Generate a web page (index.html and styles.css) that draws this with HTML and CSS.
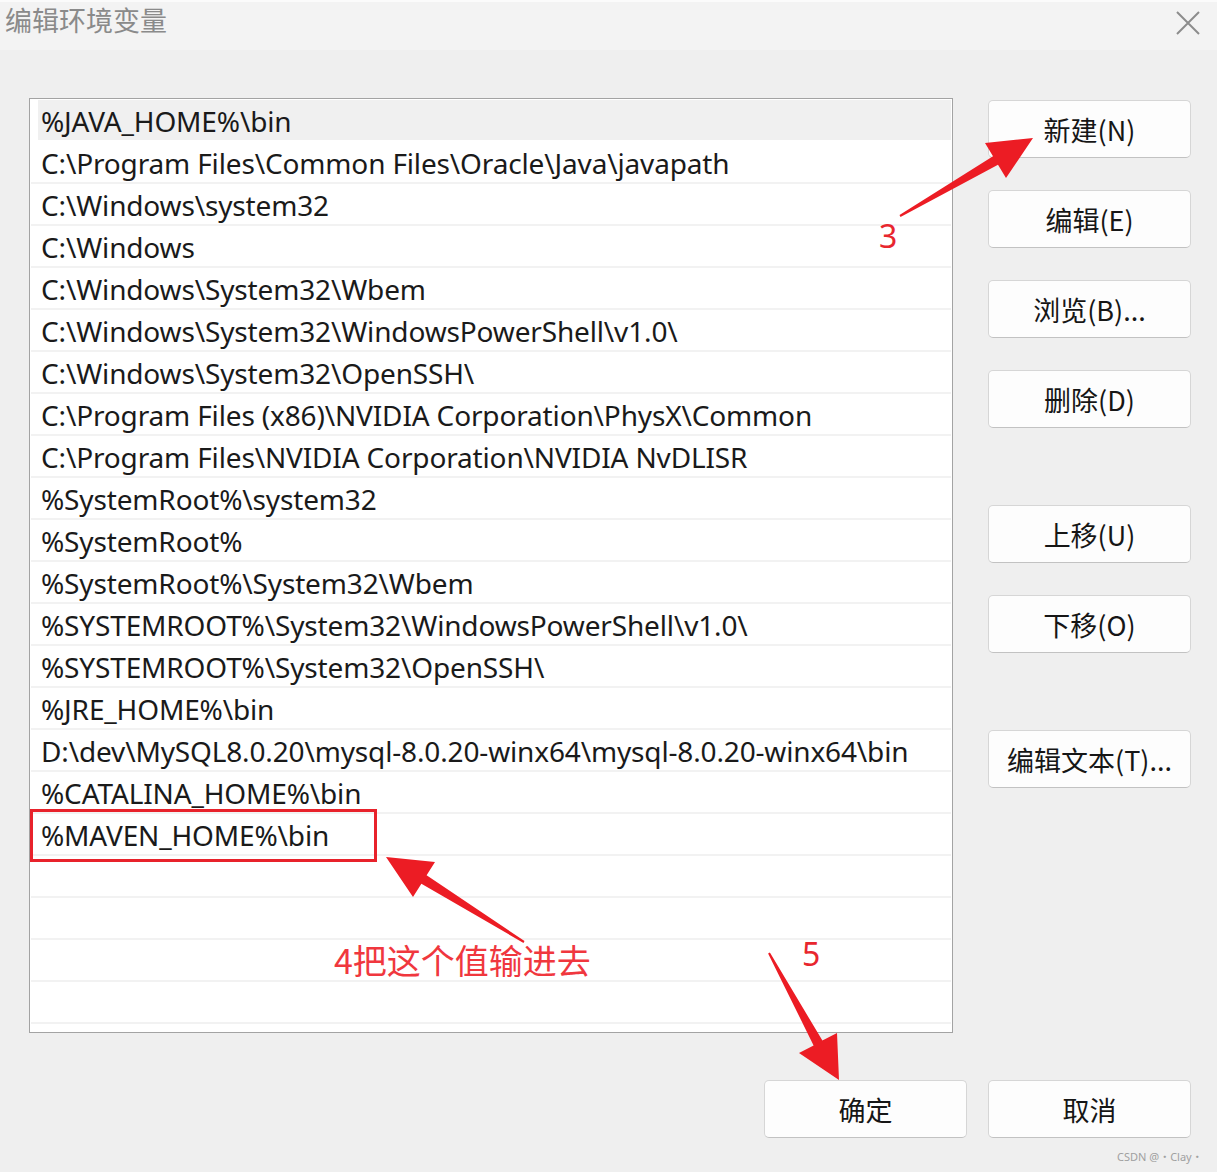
FILE: index.html
```html
<!DOCTYPE html>
<html lang="zh-CN">
<head>
    <meta charset="UTF-8">
    <title>编辑环境变量</title>
    <link rel="stylesheet" href="styles.css">
</head>
<body>
    <div class="dialog">
        <div class="titlebar">
            <span class="title">编辑环境变量</span>
            <svg class="close" width="26" height="26" viewBox="0 0 26 26">
                <path d="M2 2 L24 24 M24 2 L2 24" stroke="#8c8c8c" stroke-width="2" fill="none"/>
            </svg>
        </div>

        <div class="main">
            <div class="list">
                <div class="row selected">%JAVA_HOME%\bin</div>
                <div class="row">C:\Program Files\Common Files\Oracle\Java\javapath</div>
                <div class="row">C:\Windows\system32</div>
                <div class="row">C:\Windows</div>
                <div class="row">C:\Windows\System32\Wbem</div>
                <div class="row">C:\Windows\System32\WindowsPowerShell\v1.0\</div>
                <div class="row">C:\Windows\System32\OpenSSH\</div>
                <div class="row">C:\Program Files (x86)\NVIDIA Corporation\PhysX\Common</div>
                <div class="row">C:\Program Files\NVIDIA Corporation\NVIDIA NvDLISR</div>
                <div class="row">%SystemRoot%\system32</div>
                <div class="row">%SystemRoot%</div>
                <div class="row">%SystemRoot%\System32\Wbem</div>
                <div class="row">%SYSTEMROOT%\System32\WindowsPowerShell\v1.0\</div>
                <div class="row">%SYSTEMROOT%\System32\OpenSSH\</div>
                <div class="row">%JRE_HOME%\bin</div>
                <div class="row">D:\dev\MySQL8.0.20\mysql-8.0.20-winx64\mysql-8.0.20-winx64\bin</div>
                <div class="row">%CATALINA_HOME%\bin</div>
                <div class="row">%MAVEN_HOME%\bin</div>
                <div class="row"></div>
                <div class="row"></div>
                <div class="row"></div>
                <div class="row"></div>
            </div>

            <div class="side">
                <button class="btn">新建(N)</button>
                <button class="btn">编辑(E)</button>
                <button class="btn">浏览(B)...</button>
                <button class="btn">删除(D)</button>
                <button class="btn group">上移(U)</button>
                <button class="btn">下移(O)</button>
                <button class="btn group">编辑文本(T)...</button>
            </div>
        </div>

        <div class="footer">
            <button class="btn">确定</button>
            <button class="btn">取消</button>
        </div>
    </div>

    <!-- 标注层 -->
    <div class="marks">
        <svg width="1217" height="1172" viewBox="0 0 1217 1172">
            <rect x="31.5" y="810.5" width="344" height="50" fill="none" stroke="#e8222b" stroke-width="3"/>
            <polygon fill="#ec1c24" points="899.5,215.1 993,156.2 985,143 1033,138 1006,178 998,164.8 900.5,216.9"/>
            <polygon fill="#ec1c24" points="524.5,941.1 426.6,875.2 435,862 386,857 413,897 421.4,883.8 523.5,942.9"/>
            <polygon fill="#ec1c24" points="768.1,953.5 813.6,1045.4 799,1053 839,1080 837,1033 822.4,1040.6 769.9,952.5"/>
        </svg>
        <span class="num n3">3</span>
        <span class="num n5">5</span>
        <span class="note">4把这个值输进去</span>
        <span class="watermark">CSDN @・Clay・</span>
    </div>
</body>
</html>
```

FILE: styles.css
```css
body {
    margin: 0;
    background: #efefef;
    font-family: "Noto Sans", "Noto Sans CJK SC", sans-serif;
    color: #1a1a1a;
    width: 1217px;
    height: 1172px;
    overflow: hidden;
    position: relative;
}
.titlebar {
    height: 48px;
    border-top: 2px solid #fbfbfb;
    background: #f3f3f3;
    display: flex;
    justify-content: space-between;
    align-items: center;
    padding: 0 16px 0 5px;
}
.title {
    font-family: "Noto Sans CJK SC", sans-serif;
    font-size: 27px;
    color: #8a8a8a;
    margin-top: -14px;
}
.close {
    margin-top: -6px;
}
.main {
    display: flex;
    padding: 48px 0 0 29px;
    gap: 35px;
}
.list {
    width: 920px;
    height: 932px;
    border: 1px solid #a3a3a3;
    background: #fff;
    padding: 1px 1px 0 1px;
}
.row {
    height: 40px;
    border-bottom: 2px solid #f2f2f2;
    padding-left: 10px;
    font-size: 28px;
    line-height: 42px;
    white-space: nowrap;
    font-family: "Noto Sans", "Noto Sans CJK SC", sans-serif;
    letter-spacing: -0.15px;
}
.row.selected {
    background: linear-gradient(to right, #fff 7px, #f0f0f0 7px);
    border-bottom-color: #fff;
}
.side {
    display: flex;
    flex-direction: column;
    gap: 32px;
    padding-top: 2px;
}
.btn {
    width: 203px;
    height: 58px;
    background: #fdfdfd;
    border: 1px solid #d6d6d6;
    border-bottom-color: #c2c2c2;
    border-radius: 5px;
    font-family: "Noto Sans CJK SC", sans-serif;
    font-size: 27px;
    color: #161616;
    padding: 0;
}
.btn.group {
    margin-top: 45px;
}
.footer {
    display: flex;
    justify-content: flex-end;
    gap: 21px;
    padding: 47px 26px 0 0;
}
.marks {
    position: absolute;
    left: 0;
    top: 0;
    width: 1217px;
    height: 1172px;
    pointer-events: none;
}
.marks svg {
    position: absolute;
    left: 0;
    top: 0;
}
.num {
    position: absolute;
    font-family: "Noto Sans", sans-serif;
    font-size: 32px;
    color: #e8262e;
    line-height: 1;
}
.n3 {
    left: 879px;
    top: 220px;
}
.n5 {
    left: 802px;
    top: 938px;
}
.note {
    position: absolute;
    left: 334px;
    top: 940px;
    font-family: "Noto Sans CJK SC", sans-serif;
    font-size: 34px;
    color: #f0373e;
    line-height: 1.2;
}
.watermark {
    position: absolute;
    left: 1117px;
    top: 1148px;
    font-family: "Noto Sans", "Noto Sans CJK SC", sans-serif;
    font-size: 11px;
    color: #a0a0a0;
}
```
